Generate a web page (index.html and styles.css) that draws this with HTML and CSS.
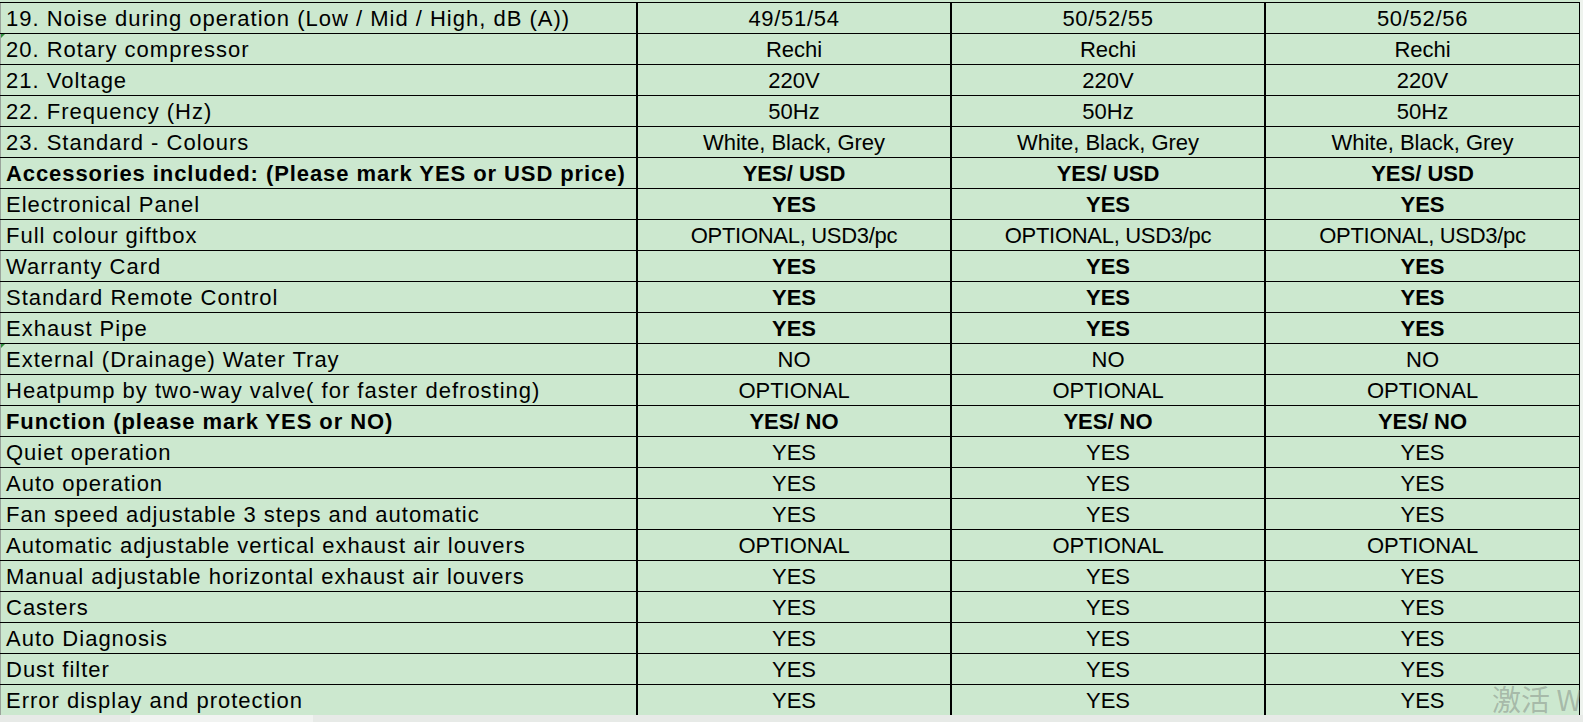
FILE: index.html
```html
<!DOCTYPE html>
<html lang="en">
<head>
<meta charset="utf-8">
<title>Spec sheet</title>
<link rel="stylesheet" href="styles.css">
</head>
<body>
<div class="screen">
  <div class="sheet">
    <div class="row"><div class="cell label">19. Noise during operation (Low / Mid / High, dB (A))</div><div class="cell num">49/51/54</div><div class="cell num">50/52/55</div><div class="cell last num">50/52/56</div></div>
    <div class="row"><div class="cell label flag">20. Rotary compressor</div><div class="cell">Rechi</div><div class="cell">Rechi</div><div class="cell last">Rechi</div></div>
    <div class="row"><div class="cell label">21. Voltage</div><div class="cell">220V</div><div class="cell">220V</div><div class="cell last">220V</div></div>
    <div class="row"><div class="cell label">22. Frequency (Hz)</div><div class="cell">50Hz</div><div class="cell">50Hz</div><div class="cell last">50Hz</div></div>
    <div class="row"><div class="cell label">23. Standard - Colours</div><div class="cell">White, Black, Grey</div><div class="cell">White, Black, Grey</div><div class="cell last">White, Black, Grey</div></div>
    <div class="row bold"><div class="cell label">Accessories included: (Please mark YES or USD price)</div><div class="cell">YES/ USD</div><div class="cell">YES/ USD</div><div class="cell last">YES/ USD</div></div>
    <div class="row"><div class="cell label">Electronical Panel</div><div class="cell b">YES</div><div class="cell b">YES</div><div class="cell last b">YES</div></div>
    <div class="row"><div class="cell label">Full colour giftbox</div><div class="cell tight">OPTIONAL, USD3/pc</div><div class="cell tight">OPTIONAL, USD3/pc</div><div class="cell last tight">OPTIONAL, USD3/pc</div></div>
    <div class="row"><div class="cell label">Warranty Card</div><div class="cell b">YES</div><div class="cell b">YES</div><div class="cell last b">YES</div></div>
    <div class="row"><div class="cell label">Standard Remote Control</div><div class="cell b">YES</div><div class="cell b">YES</div><div class="cell last b">YES</div></div>
    <div class="row"><div class="cell label">Exhaust Pipe</div><div class="cell b">YES</div><div class="cell b">YES</div><div class="cell last b">YES</div></div>
    <div class="row"><div class="cell label flag">External (Drainage) Water Tray</div><div class="cell">NO</div><div class="cell">NO</div><div class="cell last">NO</div></div>
    <div class="row"><div class="cell label">Heatpump by two-way valve( for faster defrosting)</div><div class="cell">OPTIONAL</div><div class="cell">OPTIONAL</div><div class="cell last">OPTIONAL</div></div>
    <div class="row bold"><div class="cell label">Function (please mark YES or NO)</div><div class="cell">YES/ NO</div><div class="cell">YES/ NO</div><div class="cell last">YES/ NO</div></div>
    <div class="row"><div class="cell label">Quiet operation</div><div class="cell">YES</div><div class="cell">YES</div><div class="cell last">YES</div></div>
    <div class="row"><div class="cell label">Auto operation</div><div class="cell">YES</div><div class="cell">YES</div><div class="cell last">YES</div></div>
    <div class="row"><div class="cell label">Fan speed adjustable 3 steps and automatic</div><div class="cell">YES</div><div class="cell">YES</div><div class="cell last">YES</div></div>
    <div class="row"><div class="cell label">Automatic adjustable vertical exhaust air louvers</div><div class="cell">OPTIONAL</div><div class="cell">OPTIONAL</div><div class="cell last">OPTIONAL</div></div>
    <div class="row"><div class="cell label">Manual adjustable horizontal exhaust air louvers</div><div class="cell">YES</div><div class="cell">YES</div><div class="cell last">YES</div></div>
    <div class="row"><div class="cell label">Casters</div><div class="cell">YES</div><div class="cell">YES</div><div class="cell last">YES</div></div>
    <div class="row"><div class="cell label">Auto Diagnosis</div><div class="cell">YES</div><div class="cell">YES</div><div class="cell last">YES</div></div>
    <div class="row"><div class="cell label">Dust filter</div><div class="cell">YES</div><div class="cell">YES</div><div class="cell last">YES</div></div>
    <div class="row"><div class="cell label">Error display and protection</div><div class="cell">YES</div><div class="cell">YES</div><div class="cell last">YES</div></div>
    <div class="watermark">激活 W</div>
  </div>
  <div class="tabs"><span class="tab t1"></span><span class="tab t2"></span></div>
</div>
</body>
</html>
```

FILE: styles.css
```css
html, body {
  margin: 0;
  padding: 0;
}
body {
  background: #eef3ee;
  font-family: "Liberation Sans", Arial, sans-serif;
  color: #000;
  overflow: hidden;
}
.screen {
  width: 1583px;
  height: 722px;
  display: flex;
  flex-direction: column;
}
.sheet {
  position: relative;
  width: 1580px;
  background: #cce8cf;
  padding-top: 2px;
  overflow: hidden;
}
.row {
  display: grid;
  grid-template-columns: 636px 314px 314px 316px;
  height: 31px;
  border-top: 1px solid #000;
  box-sizing: border-box;
}
.row:last-of-type {
  border-bottom: 1px solid #000;
  height: 32px;
}
.cell {
  box-sizing: border-box;
  border-left: 2px solid #000;
  font-size: 22px;
  line-height: 28px;
  padding-top: 2px;
  text-align: center;
  white-space: nowrap;
  overflow: hidden;
}
.cell.num {
  letter-spacing: 0.7px;
}
.cell.tight {
  letter-spacing: -0.3px;
}
.cell.label {
  position: relative;
  border-left: 1px solid #9aa39b;
  text-align: left;
  padding-left: 5px;
  letter-spacing: 1px;
}
.row.bold .cell.label {
  letter-spacing: 0.92px;
}
.cell.last {
  border-right: 1px solid #000;
}
.row.bold .cell, .cell.b {
  font-weight: bold;
}
.cell.flag::before {
  content: "";
  position: absolute;
  left: 0;
  top: 0;
  border-top: 4px solid #2f8f3f;
  border-right: 4px solid transparent;
}
.watermark {
  position: absolute;
  left: 1492px;
  top: 681px;
  font-family: "Noto Sans CJK SC", "Liberation Sans", sans-serif;
  font-size: 29px;
  line-height: 34px;
  color: rgba(120, 128, 122, 0.45);
  white-space: nowrap;
  pointer-events: none;
}
.tabs {
  flex: 1;
  display: flex;
  background: #e7eae7;
  width: 1583px;
}
.tab {
  display: block;
  height: 100%;
}
.t1 { width: 130px; }
.t2 { width: 183px; background: #f1f3f1; }
```
